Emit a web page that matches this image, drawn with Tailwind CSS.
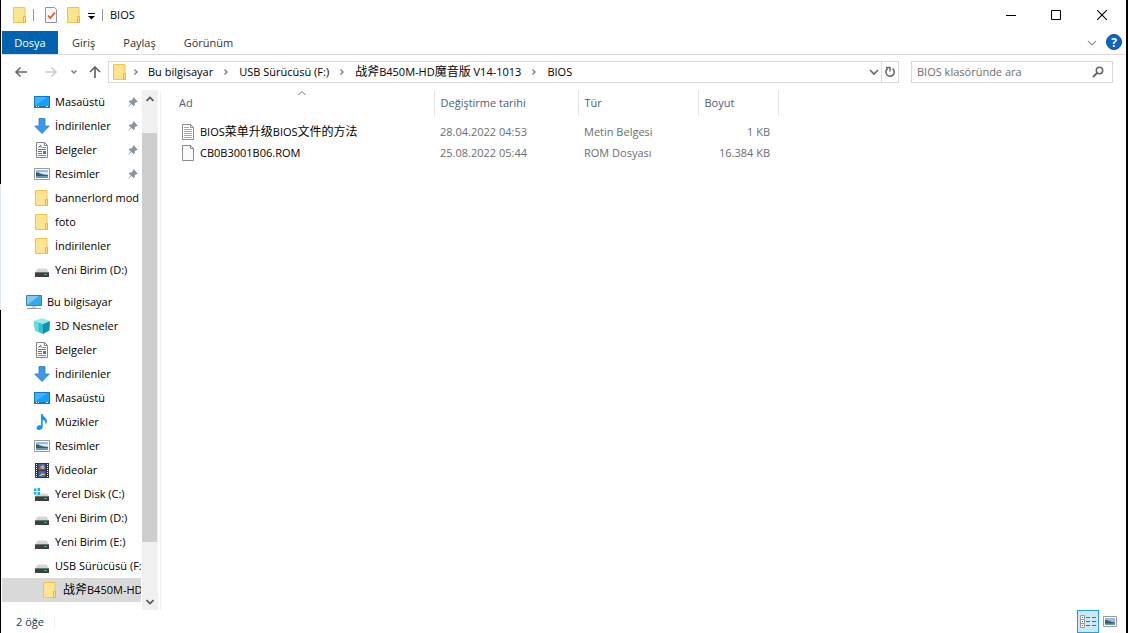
<!DOCTYPE html>
<html lang="tr">
  <head>
    <meta charset="UTF-8" />
    <meta name="viewport" content="width=device-width, initial-scale=1.0" />
    <title>BIOS</title>
    <script src="https://cdn.jsdelivr.net/npm/@tailwindcss/browser@4"></script>
  </head>
  <body
    class="flex h-screen overflow-hidden bg-black font-['Open_Sans','Noto_Sans_CJK_SC',sans-serif] text-[11px] leading-4 text-black"
  >
    <!-- Icons -->
    <svg class="hidden">
      <symbol id="folder" viewBox="0 0 16 16">
        <path d="M1.500.5h11.500v15h-11.500z" fill="#ffe48f" stroke="#edc64f" />
        <path d="M11.500 9.500h2v6h-2z" fill="#ffe48f" stroke="#e3b83c" />
      </symbol>
      <symbol id="desktop" viewBox="0 0 16 16">
        <path d="M0 2h16v12H0z" fill="#0b78c9" />
        <path d="M1 3h14v9H1z" fill="#14a0fb" />
        <path d="M1 12V3h12z" fill="#3fb3ff" />
        <path d="M2 12.500h1M4 12.500h1M12 12.500h2" stroke="#fff" />
      </symbol>
      <symbol id="download" viewBox="0 0 16 16">
        <path d="M5 .5h6v7.500h4.300L8 15.500.7 8H5z" fill="#3c98e8" stroke="#2778c4" stroke-width=".8" />
      </symbol>
      <symbol id="document" viewBox="0 0 16 16">
        <path d="M2.500.5h8l3 3v12h-11z" fill="#fff" stroke="#858585" />
        <path d="M10.500.5v3h3" fill="none" stroke="#858585" />
        <path d="M4.500 6L6 3.500h1V6M4 7.500h8M4 9.500h4M4 11.500h4" fill="none" stroke="#2f83bd" />
        <path d="M8.500 5.500H12M4 13.500h8" stroke="#8a8a8a" />
        <path d="M9 9h3v3H9z" fill="#3d7fb0" />
      </symbol>
      <symbol id="picture" viewBox="0 0 16 16">
        <path d="M.5 2.500h15v11H.5z" fill="#fff" stroke="#9a9a9a" />
        <path d="M2 4h12v8H2z" fill="#8fbdf2" />
        <path d="M5 6h9v2.500H7z" fill="#dcebfa" />
        <path d="M2 6.500c3 0 5 2 12 2.500v1H2z" fill="#3c6157" />
        <path d="M2 10h12v2H2z" fill="#5f9ac0" />
      </symbol>
      <symbol id="drive" viewBox="0 0 16 16">
        <path d="M3.500 6.500h9L15 10.500H1z" fill="#d3d6d8" />
        <path d="M1 10h14v5H1z" fill="#3c4043" />
        <path d="M1 10.500h14" stroke="#6c7072" />
        <path d="M10.500 12h2v1h-2z" fill="#38e46b" />
      </symbol>
      <symbol id="sysdrive" viewBox="0 0 16 16">
        <path d="M4 7.500h9l2 3H1z" fill="#d3d6d8" />
        <path d="M1 10h14v5H1z" fill="#3c4043" />
        <path d="M1 10.500h14" stroke="#6c7072" />
        <path d="M10.500 12h2v1h-2z" fill="#38e46b" />
        <path d="M0 2.500h2.500V5H0zM3.500 2H6v3H3.500zM0 6h2.500v2.500H0zM3.500 6H6v3H3.500z" fill="#14b4ee" />
      </symbol>
      <symbol id="computer" viewBox="0 0 16 16">
        <path d="M.5 1.500h15v10H.5z" fill="#35a9ee" stroke="#4f7f9e" />
        <path d="M1 11V2h12z" fill="#7ccbf9" />
        <path d="M6 12h4v2H6z" fill="#c9d2d8" />
        <path d="M1 14.500h14" stroke="#8b9eac" />
      </symbol>
      <symbol id="cube" viewBox="0 0 16 16">
        <path d="M0 3l8-3 8 3-7 3z" fill="#9be9ef" />
        <path d="M0 3l9 3v10l-8-3.500z" fill="#2fc0d2" />
        <path d="M16 3L9 6v10l6.500-3.500z" fill="#0d93ad" />
        <path d="M0 3l4.500 1.500V14L1 12.500z" fill="#6ad9e4" />
      </symbol>
      <symbol id="music" viewBox="0 0 16 16">
        <path d="M7 0h1.500c.5 3 5 4 4.500 7.500-.2 1.500-1 2.500-1.800 3.200C12 7.500 10.500 6 8.700 5.700V13c0 2-2 3-3.700 3-1.500 0-2.500-.8-2.500-2.200C2.500 12 4.800 11 7 11.500z" fill="#1295ea" />
      </symbol>
      <symbol id="video" viewBox="0 0 16 16">
        <path d="M1 1h14v15H1z" fill="#33343a" />
        <path d="M2.500 2v14M13.500 2v14" stroke="#fff" stroke-dasharray="1 1" />
        <path d="M4.500 2h7v6h-7z" fill="#3b67c8" />
        <path d="M4.500 9h7v6h-7z" fill="#3b67c8" />
        <path d="M6 5l3-2 2 3-3 1zM5 14l3-3 3 1-1 2z" fill="#e7b62c" />
        <path d="M5 6h2v1.500H5zM8 13h3v1H8z" fill="#c2503f" />
      </symbol>
      <symbol id="textfile" viewBox="0 0 14 16">
        <path d="M1.500.5h8l3 3v12h-11z" fill="#fff" stroke="#8d8d8d" />
        <path d="M9.500.5v3h3" fill="none" stroke="#8d8d8d" />
        <path d="M3 3.500h5M3 5.500h8M3 7.500h8M3 9.500h8M3 11.500h8M3 13.500h8" stroke="#a5a5a5" />
      </symbol>
      <symbol id="blankfile" viewBox="0 0 14 16">
        <path d="M1.500.5h8l3 3v12h-11z" fill="#fbfbfb" stroke="#8d8d8d" />
        <path d="M9.500.5v3h3" fill="none" stroke="#8d8d8d" />
      </symbol>
      <symbol id="pin" viewBox="0 0 10 10">
        <path d="M5.500.3l4.200 4.200-1 .8-.6-.1-1.600 1.600.1 1.700-.9.800-2.200-2.200L.6 9.800l-.4-.4L2.900 6.500.7 4.300l.9-.8 1.700.1L4.900 2l-.2-.8z" fill="#8796a3" />
      </symbol>
      <symbol id="crumb" viewBox="0 0 6 8">
        <path d="M1.500 1.500L4 4 1.500 6.500" fill="none" stroke="#777" stroke-width="1.300" />
      </symbol>
    </svg>

    <!-- Sliver of the desktop left of the window -->
    <div class="flex w-px shrink-0 flex-col">
      <div class="flex-[184]"></div>
      <div class="flex-[126] bg-[#dfe8ef]"></div>
      <div class="flex-[323]"></div>
    </div>

    <div class="mr-0.5 flex min-w-0 flex-1 flex-col bg-white pl-px">
      <!-- Title bar -->
      <header class="flex h-[31px] shrink-0 items-center pb-px">
        <svg class="ml-2.5 size-4"><use href="#folder" /></svg>
        <div class="ml-[5px] h-3 w-px bg-[#999]"></div>
        <button class="ml-2.5" aria-label="Özellikler">
          <svg class="h-4 w-3.5" viewBox="0 0 14 16">
            <path d="M1.500.5h9l2 2v13h-11z" fill="#f6f8fa" stroke="#8f959b" />
            <path d="M4 8.500l2.300 2.500L11 5.500" fill="none" stroke="#e8571c" stroke-width="1.800" />
          </svg>
        </button>
        <button class="ml-2" aria-label="Yeni klasör">
          <svg class="size-4"><use href="#folder" /></svg>
        </button>
        <button class="ml-1" aria-label="Hızlı erişimi özelleştir">
          <svg class="size-2.5" viewBox="0 0 10 10">
            <path d="M2 3.500h7" stroke="#000" />
            <path d="M2 6h7L5.500 9.500z" fill="#000" />
          </svg>
        </button>
        <div class="ml-1.5 h-3 w-px bg-[#999]"></div>
        <h1 class="ml-[7px] flex-1">BIOS</h1>
        <button class="grid h-full w-[45px] place-items-center" aria-label="Simge durumuna küçült">
          <svg class="size-2.5" viewBox="0 0 10 10"><path d="M0 5.500h10" stroke="#000" /></svg>
        </button>
        <button class="grid h-full w-[46px] place-items-center" aria-label="Ekranı kapla">
          <svg class="size-2.5" viewBox="0 0 10 10"><path d="M.5.5h9v9h-9z" fill="none" stroke="#000" /></svg>
        </button>
        <button class="mr-px grid h-full w-[46px] place-items-center" aria-label="Kapat">
          <svg class="size-2.5" viewBox="0 0 10 10"><path d="M0 0l10 10M10 0L0 10" stroke="#000" stroke-width="1.100" /></svg>
        </button>
      </header>

      <!-- Ribbon tabs -->
      <nav class="flex h-6 shrink-0 items-stretch border-b border-[#dadbdc] text-[#333]">
        <button class="w-14 bg-[#0063b1] text-white">Dosya</button>
        <button class="px-3.5">Giriş</button>
        <button class="px-3.5">Paylaş</button>
        <button class="px-3.5">Görünüm</button>
        <button class="mr-2 ml-auto" aria-label="Şeridi genişlet">
          <svg class="h-2 w-3" viewBox="0 0 12 8"><path d="M2 2l4 4 4-4" fill="none" stroke="#999" stroke-width="1.200" /></svg>
        </button>
        <button class="mr-1 pb-px" aria-label="Yardım">
          <span class="grid size-4 place-items-center rounded-full border border-[#0c4f91] bg-[#0a66c8] text-xs font-bold text-white">?</span>
        </button>
      </nav>

      <!-- Address bar -->
      <div class="flex h-[34px] shrink-0 items-center pr-[13px]">
        <button class="ml-3" aria-label="Geri">
          <svg class="h-3 w-3.5" viewBox="0 0 14 12"><path d="M13 6H2M6.500 1.500L2 6l4.500 4.500" fill="none" stroke="#666" stroke-width="1.600" /></svg>
        </button>
        <button class="ml-4" aria-label="İleri" disabled>
          <svg class="h-3 w-3.5" viewBox="0 0 14 12"><path d="M1 6h11M7.500 1.500L12 6l-4.500 4.500" fill="none" stroke="#ccc" stroke-width="1.600" /></svg>
        </button>
        <button class="ml-3" aria-label="Son konumlar">
          <svg class="h-2 w-2" viewBox="0 0 8 8"><path d="M1.500 2.500L4 5l2.500-2.500" fill="none" stroke="#777" stroke-width="1.400" /></svg>
        </button>
        <button class="ml-2.5" aria-label="Yukarı">
          <svg class="h-3.5 w-3.5" viewBox="0 0 14 14"><path d="M7 13V2M2 7l5-5 5 5" fill="none" stroke="#666" stroke-width="1.700" /></svg>
        </button>
        <div class="ml-1.5 flex h-[22px] min-w-0 flex-1 items-center border border-[#d9d9d9]">
          <svg class="ml-[3px] size-4 shrink-0"><use href="#folder" /></svg>
          <svg class="mx-[5px] h-2 w-1.5 shrink-0"><use href="#crumb" /></svg>
          <a href="#" class="ml-1 whitespace-nowrap">Bu bilgisayar</a>
          <svg class="mx-2.5 h-2 w-1.5 shrink-0"><use href="#crumb" /></svg>
          <a href="#" class="whitespace-nowrap">USB Sürücüsü (F:)</a>
          <svg class="mx-2.5 h-2 w-1.5 shrink-0"><use href="#crumb" /></svg>
          <a href="#" class="whitespace-nowrap"><span class="text-xs">战斧</span>B450M-HD<span class="text-xs">魔音版</span> V14-1013</a>
          <svg class="mx-2.5 h-2 w-1.5 shrink-0"><use href="#crumb" /></svg>
          <a href="#" class="whitespace-nowrap">BIOS</a>
          <button class="mr-0.5 ml-auto" aria-label="Önceki konumlar">
            <svg class="h-2 w-2.5" viewBox="0 0 10 8"><path d="M1 2l4 4 4-4" fill="none" stroke="#666" stroke-width="1.700" /></svg>
          </button>
          <button class="grid h-full w-[17px] place-items-center border-l border-[#d9d9d9]" aria-label="Yenile">
            <svg class="size-3" viewBox="0 0 12 12">
              <path d="M8.500 2.600A4.200 4.200 0 1 1 3.800 2.500" fill="none" stroke="#666" stroke-width="1.500" />
              <path d="M2 1.500h4v4" fill="none" stroke="#666" stroke-width="1.400" />
            </svg>
          </button>
        </div>
        <label class="ml-3 flex h-[22px] w-[202px] items-center border border-[#d9d9d9] pr-[7px] pl-[5px]">
          <input type="text" class="min-w-0 flex-1 outline-none placeholder:text-[#6d6d6d]" placeholder="BIOS klasöründe ara" aria-label="BIOS klasöründe ara" />
          <svg class="size-3.5" viewBox="0 0 14 14">
            <circle cx="8.500" cy="5.500" r="3.200" fill="none" stroke="#666" stroke-width="1.500" />
            <path d="M6.300 7.800L2 12" stroke="#666" stroke-width="1.900" />
          </svg>
        </label>
      </div>

      <div class="flex min-h-0 flex-1">
        <!-- Navigation pane -->
        <aside class="mt-px flex w-[159px] shrink-0 border-r border-[#f0f0f0]">
          <ul id="nav" class="mr-px min-w-0 flex-1 overflow-hidden"></ul>
          <div class="mr-0.5 flex w-4 shrink-0 flex-col bg-[#f0f0f0]">
            <button class="grid h-[17px] place-items-center" aria-label="Yukarı kaydır">
              <svg class="h-2 w-2" viewBox="0 0 8 8"><path d="M.5 6L4 2.500 7.500 6" fill="none" stroke="#555" stroke-width="1.600" /></svg>
            </button>
            <div class="flex flex-1 flex-col pt-[26px] pb-[51px]">
              <div class="mr-px flex-1 bg-[#cdcdcd]"></div>
            </div>
            <button class="grid h-[17px] place-items-center" aria-label="Aşağı kaydır">
              <svg class="h-2 w-2" viewBox="0 0 8 8"><path d="M.5 2L4 5.500 7.500 2" fill="none" stroke="#555" stroke-width="1.600" /></svg>
            </button>
          </div>
        </aside>

        <!-- File list -->
        <main class="min-w-0 flex-1 overflow-hidden pt-px">
          <table class="w-[617px] table-fixed text-left">
            <colgroup>
              <col class="w-[273px]" />
              <col class="w-36" />
              <col class="w-[120px]" />
              <col class="w-20" />
            </colgroup>
            <thead class="text-[#4c607a]">
              <tr class="h-[26px]">
                <th class="relative border-r border-[#e5e5e5] pl-[18px] font-normal">
                  Ad
                  <svg class="absolute top-0 left-1/2 h-1.5 w-2.5" viewBox="0 0 10 6"><path d="M1.500 5L5 1.500 8.500 5" fill="none" stroke="#777" /></svg>
                </th>
                <th class="border-r border-[#e5e5e5] pl-1.5 font-normal">Değiştirme tarihi</th>
                <th class="border-r border-[#e5e5e5] pl-1.5 font-normal">Tür</th>
                <th class="border-r border-[#e5e5e5] pl-1.5 font-normal">Boyut</th>
              </tr>
            </thead>
            <tbody class="text-[#6d6d6d]">
              <tr><td class="h-[5px]" colspan="4"></td></tr>
              <tr class="h-[21px]">
                <td class="pl-5 text-black">
                  <div class="flex items-center gap-[5px]">
                    <svg class="h-4 w-3.5"><use href="#textfile" /></svg>
                    <span>BIOS<span class="text-xs">菜单升级</span>BIOS<span class="text-xs">文件的方法</span></span>
                  </div>
                </td>
                <td class="pl-1.5">28.04.2022 04:53</td>
                <td class="pl-1.5">Metin Belgesi</td>
                <td class="pr-2 text-right">1 KB</td>
              </tr>
              <tr class="h-[21px]">
                <td class="pl-5 text-black">
                  <div class="flex items-center gap-[5px]">
                    <svg class="h-4 w-3.5"><use href="#blankfile" /></svg>
                    <span>CB0B3001B06.ROM</span>
                  </div>
                </td>
                <td class="pl-1.5">25.08.2022 05:44</td>
                <td class="pl-1.5">ROM Dosyası</td>
                <td class="pr-2 text-right">16.384 KB</td>
              </tr>
            </tbody>
          </table>
        </main>
      </div>

      <!-- Status bar -->
      <footer class="flex h-[23px] shrink-0 items-center pr-2 pl-3.5">
        <span class="text-[#1e395b]">2 öğe</span>
        <div class="ml-2.5 h-3 w-px bg-[#f0f0f0]"></div>
        <button class="ml-auto grid h-[23px] w-[22px] place-items-center border border-[#26a0da] bg-[#cbe8f6]" aria-label="Ayrıntılar">
          <svg class="h-[13px] w-4" viewBox="0 0 16 13">
            <path d="M.5.5h4v12h-4zM.5 4.500h4M.5 8.500h4" fill="#fff" stroke="#999" />
            <path d="M2 2.500h1M2 6.500h1M2 10.500h1M6 2.500h4M12 2.500h4M6 6.500h4M12 6.500h4M6 10.500h4M12 10.500h4" stroke="#666" />
          </svg>
        </button>
        <button class="mr-px ml-1" aria-label="Büyük simgeler">
          <svg class="h-[11px] w-3.5" viewBox="0 0 14 11">
            <path d="M.5.5h13v10H.5z" fill="#fff" stroke="#999" />
            <path d="M2 2h10v7H2z" fill="#8fbdf2" />
            <path d="M2 4c3 0 5 2 10 2.500V8H2z" fill="#3c6157" />
            <path d="M2 7.500h10V9H2z" fill="#5f9ac0" />
          </svg>
        </button>
      </footer>
    </div>

    <script>
      const items = [
        { icon: "desktop", label: "Masaüstü", pinned: true },
        { icon: "download", label: "İndirilenler", pinned: true },
        { icon: "document", label: "Belgeler", pinned: true },
        { icon: "picture", label: "Resimler", pinned: true },
        { icon: "folder", label: "bannerlord mod" },
        { icon: "folder", label: "foto" },
        { icon: "folder", label: "İndirilenler" },
        { icon: "drive", label: "Yeni Birim (D:)" },
        { icon: "computer", label: "Bu bilgisayar", indent: "mt-2 pl-6" },
        { icon: "cube", label: "3D Nesneler" },
        { icon: "document", label: "Belgeler" },
        { icon: "download", label: "İndirilenler" },
        { icon: "desktop", label: "Masaüstü" },
        { icon: "music", label: "Müzikler" },
        { icon: "picture", label: "Resimler" },
        { icon: "video", label: "Videolar" },
        { icon: "sysdrive", label: "Yerel Disk (C:)" },
        { icon: "drive", label: "Yeni Birim (D:)" },
        { icon: "drive", label: "Yeni Birim (E:)" },
        { icon: "drive", label: "USB Sürücüsü (F:)" },
        {
          icon: "folder",
          label: '<span class="text-xs">战斧</span>B450M-HD',
          indent: "pl-10 bg-[#d9d9d9]",
        },
      ];

      document.getElementById("nav").innerHTML = items
        .map(
          (item) => `
            <li class="flex h-6 items-center ${item.indent || "pl-8"}">
              <svg class="size-4 shrink-0"><use href="#${item.icon}" /></svg>
              <a href="#" class="ml-[5px] min-w-0 flex-1 overflow-hidden whitespace-nowrap">${item.label}</a>
              ${item.pinned ? '<svg class="mr-[3px] size-2.5 shrink-0"><use href="#pin" /></svg>' : ""}
            </li>`
        )
        .join("");
    </script>
  </body>
</html>
